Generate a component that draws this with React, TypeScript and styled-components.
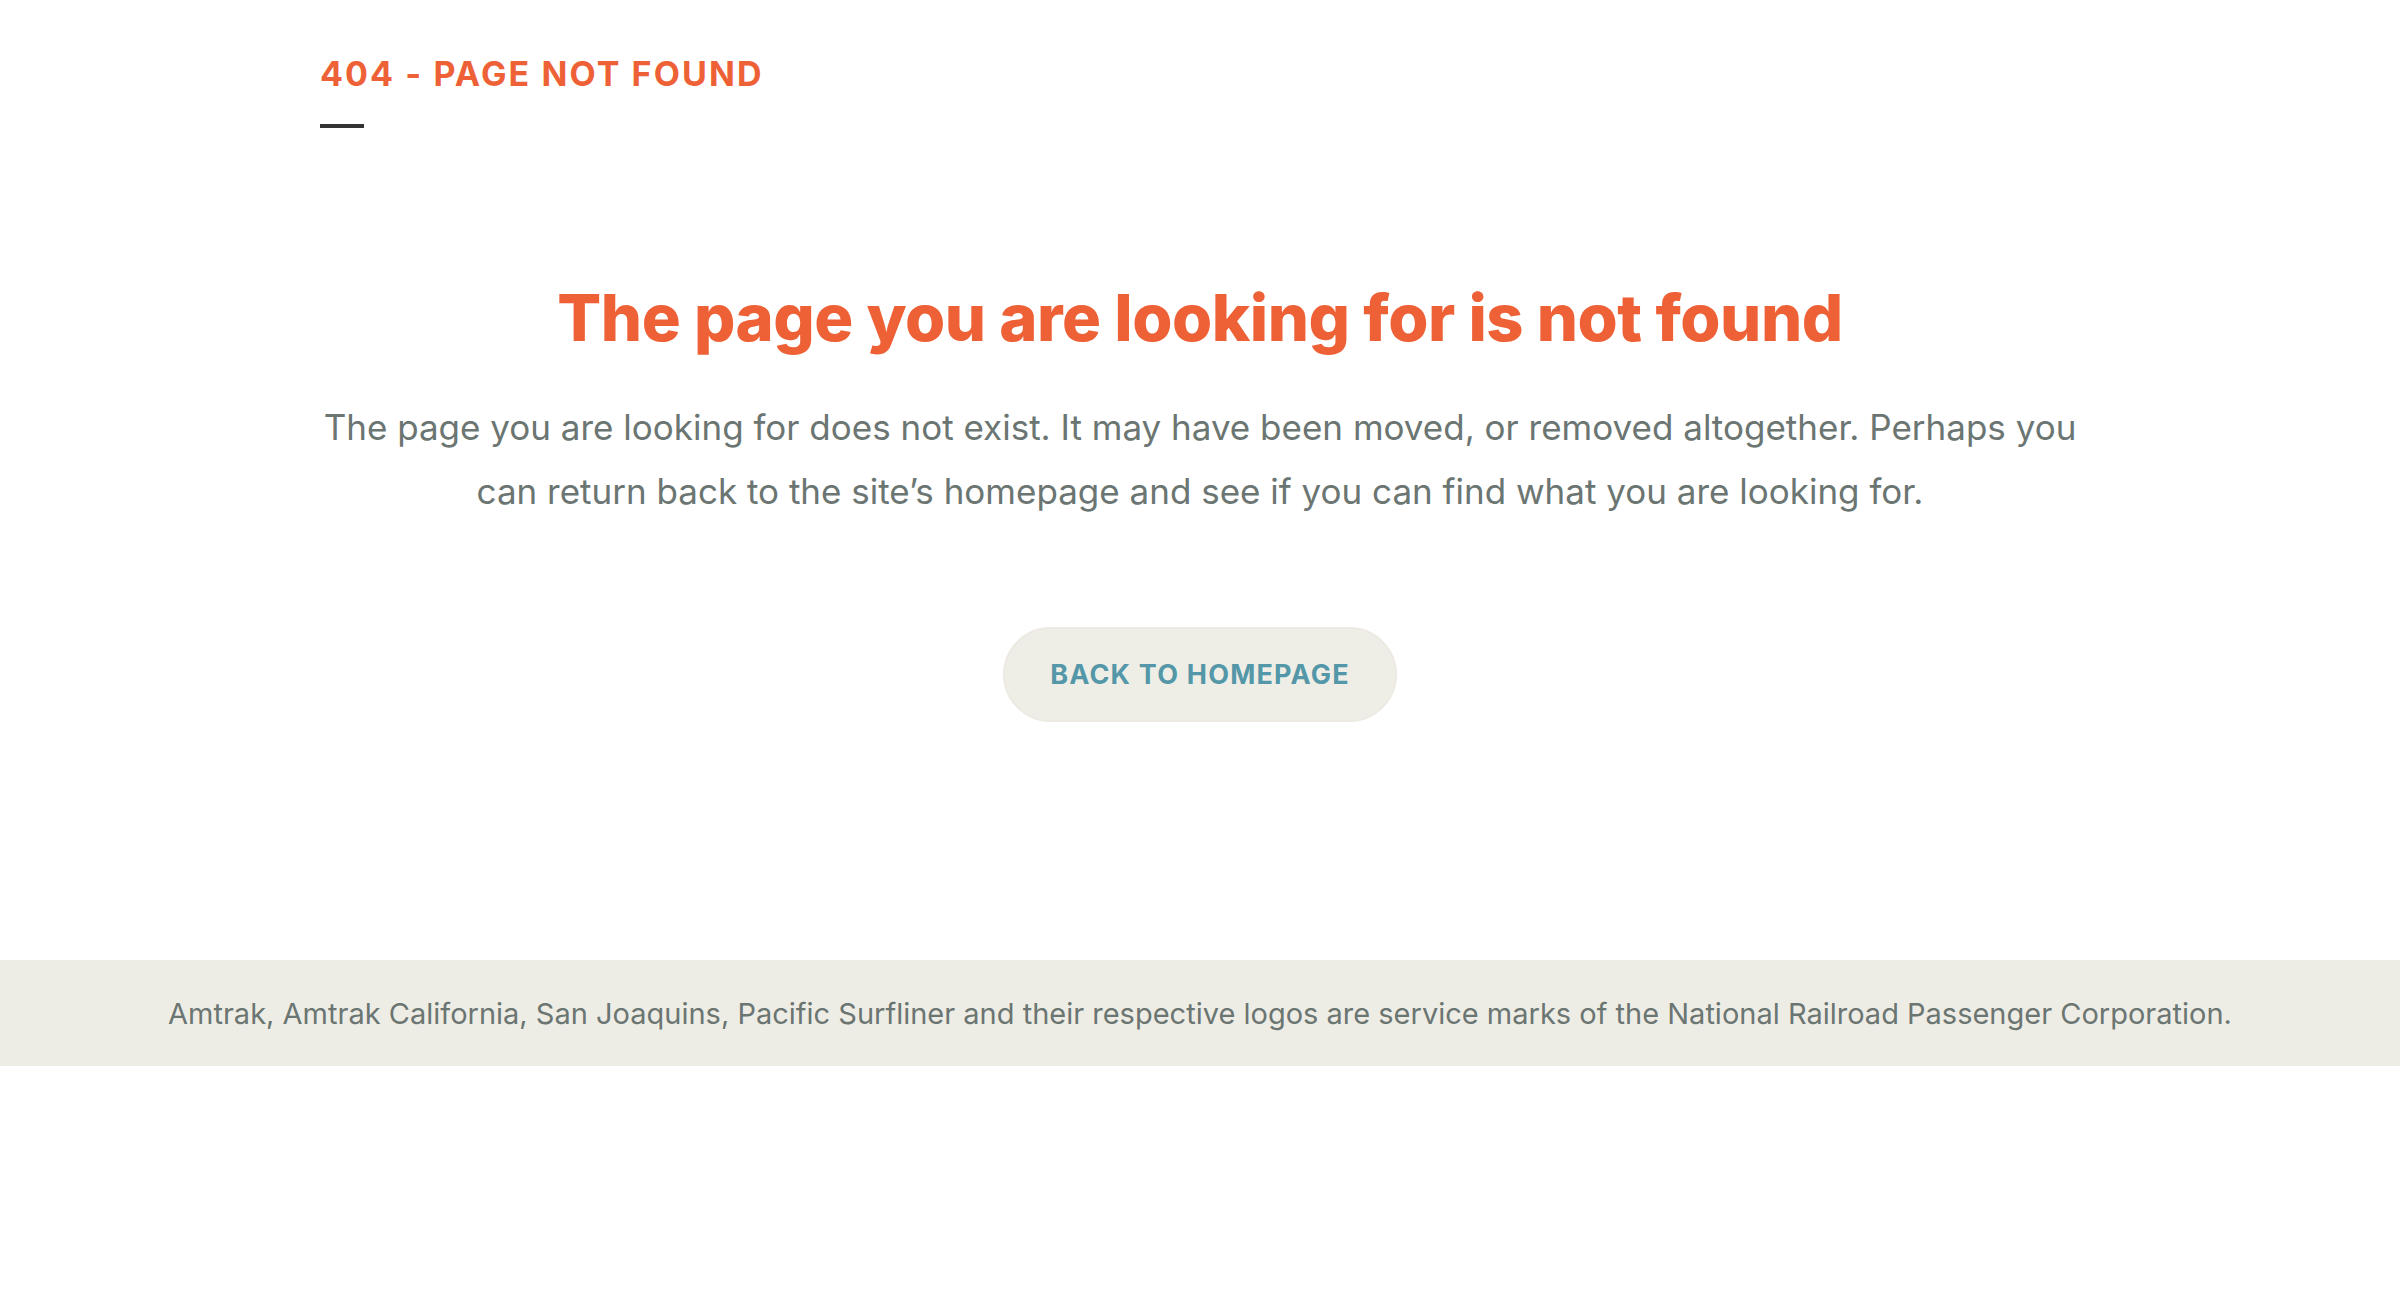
import React from "react";
import styled, { createGlobalStyle } from "styled-components";

const GlobalStyle = createGlobalStyle`
  html, body { margin: 0; padding: 0; background: #ffffff; }
  body { font-family: "Inter", "Noto Sans", sans-serif; -webkit-font-smoothing: antialiased; }
  * { box-sizing: border-box; }
`;

const Page = styled.div`
  display: flex;
  flex-direction: column;
  width: 100%;
`;

const Header = styled.header`
  padding: 51px 320px 0;
  display: flex;
  flex-direction: column;
  align-items: flex-start;
`;

const Eyebrow = styled.h2`
  margin: 0;
  font-family: "Inter", sans-serif;
  font-weight: 700;
  font-size: 34px;
  line-height: 46px;
  letter-spacing: 2.1px;
  color: #ee6137;
`;

const Rule = styled.span`
  display: block;
  width: 44px;
  height: 4px;
  margin-top: 27px;
  background: #333333;
`;

const Main = styled.main`
  display: flex;
  flex-direction: column;
  align-items: center;
  padding: 150px 320px 0;
  text-align: center;
`;

const Title = styled.h1`
  margin: 0;
  font-family: "Inter", sans-serif;
  font-weight: 800;
  font-size: 65px;
  line-height: 80px;
  letter-spacing: -0.5px;
  color: #ee6137;
`;

const Lead = styled.p`
  margin: 37px 0 0;
  font-family: "Inter", sans-serif;
  font-weight: 400;
  font-size: 35px;
  line-height: 64px;
  color: #6b7572;
`;

const HomeButton = styled.a`
  display: inline-flex;
  align-items: center;
  justify-content: center;
  margin-top: 104px;
  width: 394px;
  height: 95px;
  border-radius: 48px;
  background: #efeee6;
  border: 2px solid #eceae2;
  font-family: "Inter", sans-serif;
  font-weight: 700;
  font-size: 27px;
  letter-spacing: 1.2px;
  color: #5497a8;
  text-decoration: none;
  text-transform: uppercase;
`;

const Footer = styled.footer`
  margin-top: 238px;
  height: 106px;
  background: #eeede5;
  display: flex;
  align-items: center;
  justify-content: center;
`;

const FooterText = styled.p`
  margin: 0;
  font-family: "Inter", sans-serif;
  font-weight: 400;
  font-size: 29px;
  color: #6b7572;
`;

export default function App() {
  return (
    <Page>
      <GlobalStyle />
      <Header>
        <Eyebrow>404 - PAGE NOT FOUND</Eyebrow>
        <Rule />
      </Header>
      <Main>
        <Title>The page you are looking for is not found</Title>
        <Lead>
          The page you are looking for does not exist. It may have been moved, or removed altogether. Perhaps you can return back to the site’s homepage and see if you can find what you are looking for.
        </Lead>
        <HomeButton href="#">Back to homepage</HomeButton>
      </Main>
      <Footer>
        <FooterText>
          Amtrak, Amtrak California, San Joaquins, Pacific Surfliner and their respective logos are service marks of the National Railroad Passenger Corporation.
        </FooterText>
      </Footer>
    </Page>
  );
}
